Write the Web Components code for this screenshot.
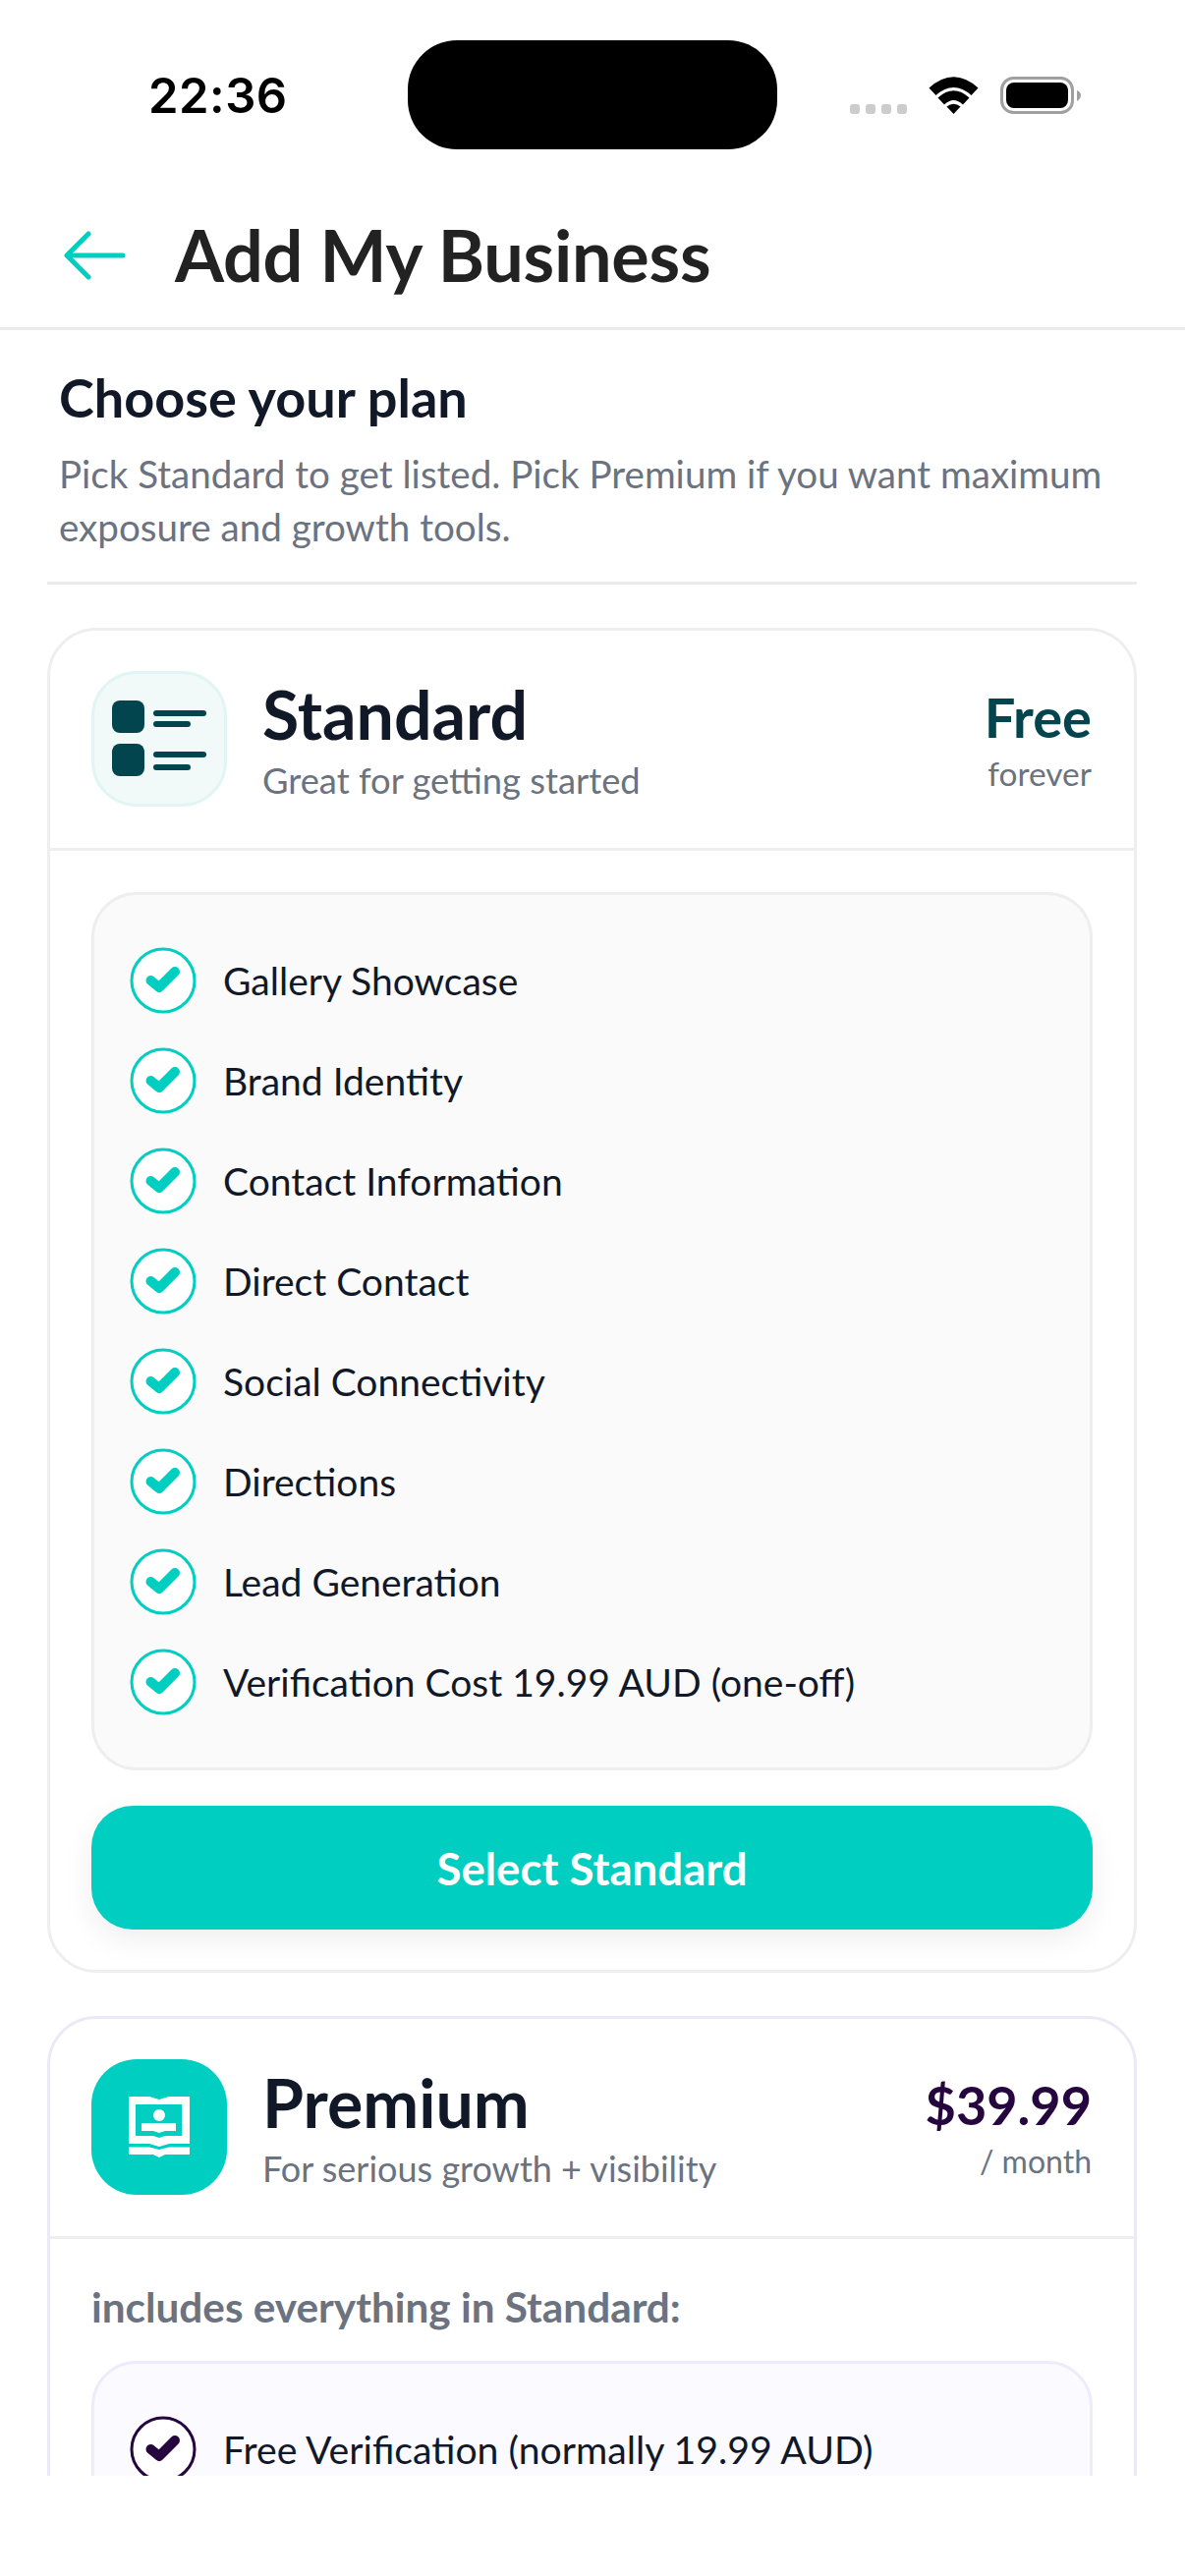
<!DOCTYPE html>
<html lang="en">
<head>
<meta charset="utf-8">
<title>Add My Business</title>
<style>
    html, body { margin: 0; padding: 0; background: #fff; }
    body { font-family: Lato, "Noto Sans", sans-serif; }
</style>
</head>
<body>
<business-page>
    <status-bar slot="status" time="22:36"></status-bar>
    <app-header slot="header" title="Add My Business"></app-header>
    <plan-intro heading="Choose your plan">Pick Standard to get listed. Pick Premium if you want maximum exposure and growth tools.</plan-intro>
    <plan-card name="Standard" tagline="Great for getting started" price="Free" period="forever" icon="standard">
        <feature-list>
            <feature-item>Gallery Showcase</feature-item>
            <feature-item>Brand Identity</feature-item>
            <feature-item>Contact Information</feature-item>
            <feature-item>Direct Contact</feature-item>
            <feature-item>Social Connectivity</feature-item>
            <feature-item>Directions</feature-item>
            <feature-item>Lead Generation</feature-item>
            <feature-item>Verification Cost 19.99 AUD (one-off)</feature-item>
        </feature-list>
        <select-button>Select Standard</select-button>
    </plan-card>
    <plan-card name="Premium" tagline="For serious growth + visibility" price="$39.99" period="/ month" icon="premium" premium>
        <includes-note>includes everything in Standard:</includes-note>
        <feature-list premium>
            <feature-item premium>Free Verification (normally 19.99 AUD)</feature-item>
        </feature-list>
    </plan-card>
</business-page>

<script>
class BusinessPage extends HTMLElement {
    constructor() {
        super();
        this.attachShadow({mode:'open'});
        this.shadowRoot.innerHTML = `
            <style>
                :host { display:flex; flex-direction:column; height:2622px; width:1206px; background:#fff; }
                .scroll { height:2184px; overflow:hidden; padding:0 49px 0 48px; display:flex; flex-direction:column; gap:44px; }
            </style>
            <slot name="status"></slot>
            <slot name="header"></slot>
            <div class="scroll"><slot></slot></div>
        `;
    }
}

class StatusBar extends HTMLElement {
    constructor() {
        super();
        this.attachShadow({mode:'open'});
        this.shadowRoot.innerHTML = `
            <style>
                :host { display:block; height:190px; box-sizing:border-box; padding-top:41px; }
                .row { display:flex; align-items:center; height:111px; padding-left:151px; }
                .time { width:264px; font:600 49px/1 Inter, "Liberation Sans", sans-serif; color:#000; letter-spacing:.5px; padding-top:2px; box-sizing:border-box; }
                .island { width:376px; height:111px; border-radius:50px; background:#000; flex:none; }
                .right { display:flex; align-items:flex-end; margin-left:74px; height:38px; }
                .dots { display:flex; gap:6px; }
                .dots i { width:10px; height:10px; border-radius:3px; background:#ccc; }
                svg { display:block; }
                .wifi { margin-left:22px; }
                .battery { margin-left:22px; }
            </style>
            <div class="row">
                <span class="time">${this.getAttribute("time")}</span>
                <div class="island"></div>
                <div class="right">
                    <div class="dots"><i></i><i></i><i></i><i></i></div>
                    <svg class="wifi" width="51" height="38" viewBox="0 0 51 38">
                        <path d="M0.5 11.5Q25.5 -11 50.5 11.5L43.5 19Q25.5 3 7.5 19Z"/>
                        <path d="M9.5 21.5Q25.5 7 41.5 21.5L35 28.5Q25.5 19.5 16 28.5Z"/>
                        <path d="M18.5 30.5Q25.5 25 32.5 30.5L25.5 38Z"/>
                    </svg>
                    <svg class="battery" width="82" height="38" viewBox="0 0 82 38">
                        <rect x="1.500" y="1.500" width="72" height="35" rx="12" fill="none" stroke="#a0a0a0" stroke-width="3"/>
                        <rect x="6" y="6" width="63" height="26" rx="8"/>
                        <path d="M78 14C81 15 82 17 82 19C82 21 81 23 78 25Z" fill="#a0a0a0"/>
                    </svg>
                </div>
            </div>
        `;
    }
}

class AppHeader extends HTMLElement {
    constructor() {
        super();
        this.attachShadow({mode:'open'});
        this.shadowRoot.innerHTML = `
            <style>
                :host { display:flex; align-items:center; height:146px; box-sizing:border-box; border-bottom:3px solid #ebebeb; padding:0 0 6px 65px; }
                svg { display:block; flex:none; margin-top:3px; }
                h1 { margin:0 0 0 50px; font:700 72px/1 Lato, sans-serif; color:#222; letter-spacing:-.25px; }
            </style>
            <svg width="63" height="50" viewBox="0 0 63 50" fill="none" stroke="#00cec0" stroke-linecap="round" stroke-linejoin="round" stroke-width="5">
                <path d="M60 25H4"/>
                <path d="M25 3L3 25L25 47"/>
            </svg>
            <h1>${this.getAttribute("title")}</h1>
        `;
    }
}

class PlanIntro extends HTMLElement {
    constructor() {
        super();
        this.attachShadow({mode:'open'});
        this.shadowRoot.innerHTML = `
            <style>
                :host { display:block; padding:36px 12px 29px; border-bottom:3px solid #ebebeb; flex:none; }
                h2 { margin:0; font:700 54px/66px Lato, sans-serif; color:#111827; }
                p { margin:17px 0 0; font:400 38.6px/54px Lato, sans-serif; color:#6b7280; }
            </style>
            <h2>${this.getAttribute("heading")}</h2>
            <p><slot></slot></p>
        `;
    }
}

class PlanCard extends HTMLElement {
    constructor() {
        super();
        this.attachShadow({mode:'open'});
        const premium = this.hasAttribute("premium");
        const standardIcon = `
            <svg width="132" height="132" viewBox="0 0 132 132" fill="#03454f">
                <rect x="18" y="27" width="33" height="33" rx="8"/>
                <rect x="18" y="71" width="33" height="33" rx="8"/>
                <rect x="60" y="37" width="54" height="6" rx="3"/>
                <rect x="60" y="48" width="38" height="6" rx="3"/>
                <rect x="60" y="79" width="54" height="6" rx="3"/>
                <rect x="60" y="92" width="38" height="6" rx="3"/>
            </svg>`;
        const premiumIcon = `
            <svg width="62" height="64" viewBox="0 0 62 64" fill="#fff">
                <path fill-rule="evenodd" d="M0 1H21L31 4L41 1H62V49H41L31 52L21 49H0ZM7 9V41H25L31 43L37 41H54V9Z"/>
                <circle cx="31" cy="20" r="6"/>
                <path d="M13 28H48V36H37L31 38L25 36H13Z"/>
                <path d="M0 52.500H21L31 55L41 52.500H62V60H37L31 63L25 60H0Z"/>
            </svg>`;
        this.shadowRoot.innerHTML = `
            <style>
                :host { display:block; flex:none; box-sizing:border-box; background:#fff; border:3px solid #eeeeee; border-radius:50px; }
                :host([premium]) { border-color:#ebe9f5; }
                .head { display:flex; align-items:center; padding:41px 43px 42px 42px; border-bottom:3px solid #eeeeee; }
                .icon { width:138px; height:138px; flex:none; box-sizing:border-box; border-radius:46px; display:flex; align-items:center; justify-content:center; background:#f1faf9; border:3px solid #e0f5f4; }
                :host([premium]) .icon { background:#00cec0; border:0; }
                svg { display:block; }
                .names { flex:1; margin-left:36px; }
                .name { font:700 68px/78px Lato, sans-serif; color:#111827; }
                .tagline { font:400 36.3px/44px Lato, sans-serif; color:#6b7280; margin-top:6px; }
                :host([premium]) .tagline { font-size:36px; }
                .price { text-align:right; padding-top:2px; }
                .amount { font:700 56px/66px Lato, sans-serif; color:#03454f; }
                :host([premium]) .amount { color:#25063f; font-size:54px; }
                .period { font:400 33.5px/46px Lato, sans-serif; color:#6b7280; margin-top:1px; }
                :host([premium]) .period { font-size:32px; }
                .body { padding:42px 42px 41px; display:flex; flex-direction:column; gap:36px; }
                :host([premium]) .body { gap:30px; padding-top:44px; }
            </style>
            <div class="head">
                <div class="icon">${premium ? premiumIcon : standardIcon}</div>
                <div class="names">
                    <div class="name">${this.getAttribute("name")}</div>
                    <div class="tagline">${this.getAttribute("tagline")}</div>
                </div>
                <div class="price">
                    <div class="amount">${this.getAttribute("price")}</div>
                    <div class="period">${this.getAttribute("period")}</div>
                </div>
            </div>
            <div class="body"><slot></slot></div>
        `;
    }
}

class FeatureList extends HTMLElement {
    constructor() {
        super();
        this.attachShadow({mode:'open'});
        this.shadowRoot.innerHTML = `
            <style>
                :host { display:flex; flex-direction:column; box-sizing:border-box; padding:36px 36px; background:#fafafa; border:3px solid #eeeeee; border-radius:46px; }
                :host([premium]) { background:#fafaff; border-color:#eeecfb; }
            </style>
            <slot></slot>
        `;
    }
}

class FeatureItem extends HTMLElement {
    constructor() {
        super();
        this.attachShadow({mode:'open'});
        const color = this.hasAttribute("premium") ? "#25063f" : "#00cec0";
        this.shadowRoot.innerHTML = `
            <style>
                :host { display:flex; align-items:center; height:102px; font:400 39px/1 Lato, sans-serif; color:#111827; }
                :host([premium]) { font-size:39.2px; }
                svg { display:block; flex:none; margin-right:27px; }
            </style>
            <svg width="68" height="68" viewBox="0 0 68 68">
                <circle cx="34" cy="34" r="32" fill="#fff" stroke="${color}" stroke-width="3"/>
                <path d="M21.500 34L30 41L46 25" fill="none" stroke="${color}" stroke-width="10" stroke-linecap="round" stroke-linejoin="round"/>
            </svg>
            <span><slot></slot></span>
        `;
    }
}

class SelectButton extends HTMLElement {
    constructor() {
        super();
        this.attachShadow({mode:'open'});
        this.shadowRoot.innerHTML = `
            <style>
                :host { display:flex; align-items:center; justify-content:center; height:126px; box-sizing:border-box; padding-top:1px; border-radius:42px; background:#00cec0; color:#fff; font:700 45.6px/1 Lato, sans-serif; box-shadow:0 10px 32px rgba(0,0,0,.07); }
            </style>
            <slot></slot>
        `;
    }
}

class IncludesNote extends HTMLElement {
    constructor() {
        super();
        this.attachShadow({mode:'open'});
        this.shadowRoot.innerHTML = `
            <style>
                :host { display:block; font:700 42.3px/50px Lato, sans-serif; color:#6b7280; }
            </style>
            <slot></slot>
        `;
    }
}

window.customElements.define('business-page', BusinessPage);
window.customElements.define('status-bar', StatusBar);
window.customElements.define('app-header', AppHeader);
window.customElements.define('plan-intro', PlanIntro);
window.customElements.define('plan-card', PlanCard);
window.customElements.define('feature-list', FeatureList);
window.customElements.define('feature-item', FeatureItem);
window.customElements.define('select-button', SelectButton);
window.customElements.define('includes-note', IncludesNote);
</script>
</body>
</html>
